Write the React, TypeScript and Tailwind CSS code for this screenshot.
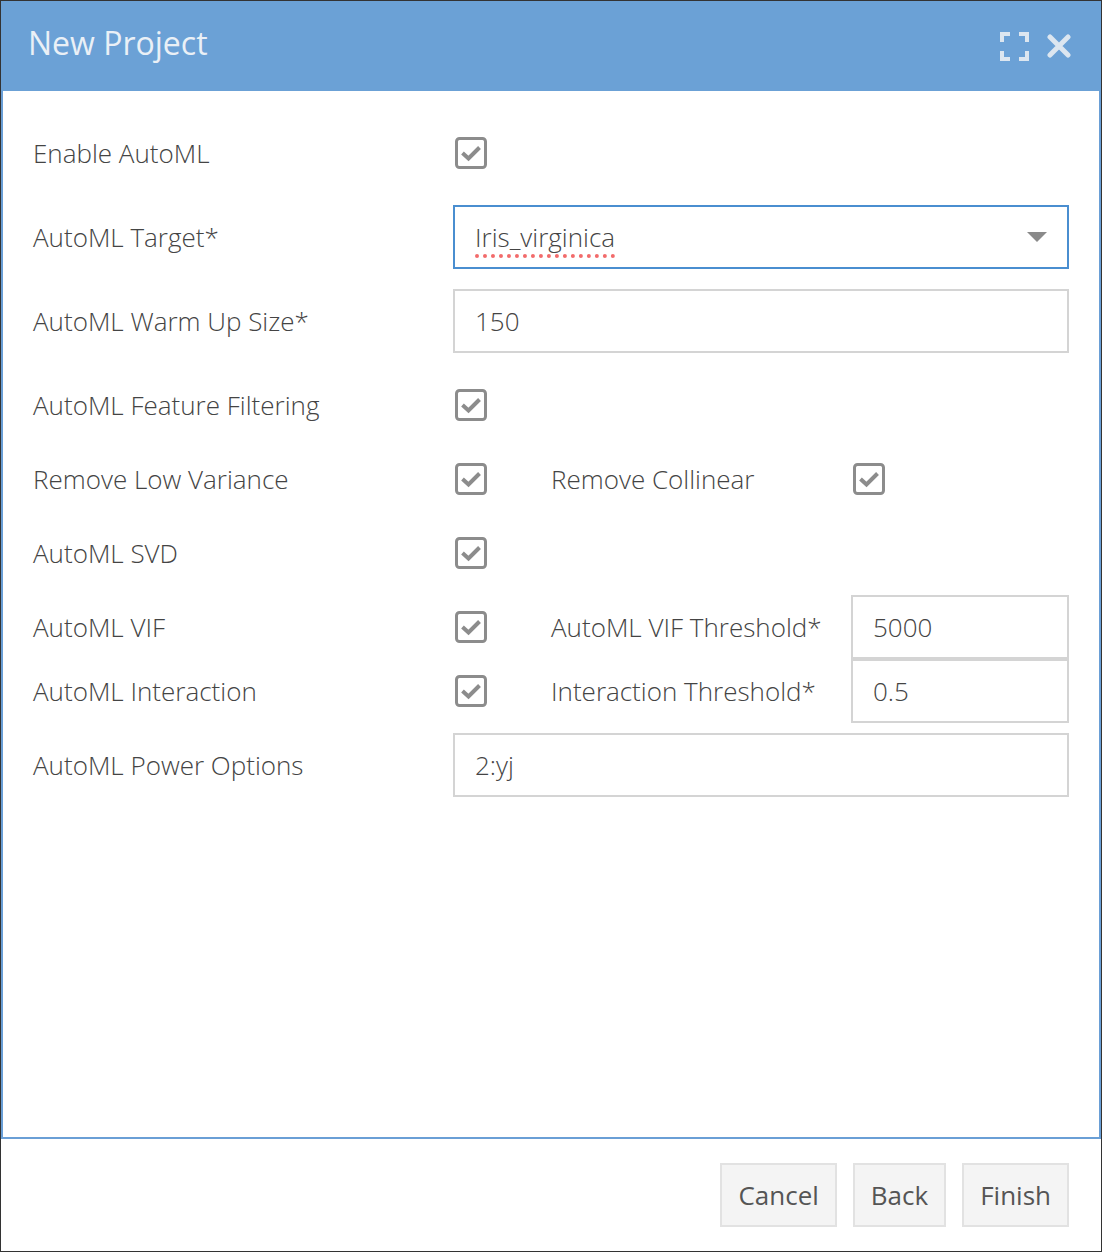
const font = { fontFamily: '"Open Sans", "Liberation Sans", sans-serif' };

const Check = () => (
  <svg width="32" height="32" viewBox="0 0 32 32" className="shrink-0">
    <rect x="1.5" y="1.5" width="29" height="29" rx="3" fill="white" stroke="#8c8c8c" strokeWidth="3" />
    <path d="M7.5 16 L13.5 21.5 L24.5 10.5" fill="none" stroke="#8c8c8c" strokeWidth="4" />
  </svg>
);

const Label = ({ children }: { children: React.ReactNode }) => (
  <div className="text-[26px] font-light text-[#444]">{children}</div>
);

const TextBox = ({ value, className = "" }: { value: string; className?: string }) => (
  <div className={`h-16 border-2 border-[#d4d4d4] flex items-center pl-5 text-[26px] font-light text-[#444] ${className}`}>
    {value}
  </div>
);

const App = () => {
  return (
    <div className="w-[1102px] h-[1252px] border border-[#333] flex flex-col bg-white" style={font}>
      <div className="h-[90px] shrink-0 bg-[#6ba1d6] flex items-center justify-between pl-[27px] pr-[30px]">
        <div className="text-[32px] text-[#eaf0f6] pb-[6px]">New Project</div>
        <div className="flex items-center gap-[18px]">
          <svg width="29" height="29" viewBox="0 0 29 29">
            <path d="M2 10 V2 H10 M19 2 H27 V10 M27 19 V27 H19 M10 27 H2 V19" fill="none" stroke="#dce6f0" strokeWidth="4" />
          </svg>
          <svg width="24" height="24" viewBox="0 0 24 24">
            <path d="M3 3 L21 21 M21 3 L3 21" fill="none" stroke="#dce6f0" strokeWidth="5" strokeLinecap="round" />
          </svg>
        </div>
      </div>
      <div className="flex-1 border-x-2 border-b-2 border-[#6a9fd6] pt-[30px] pl-[30px] pr-[30px]">
        <div className="h-16 flex items-center mb-5">
          <div className="w-[420px]"><Label>Enable AutoML</Label></div>
          <div className="pl-[2px]"><Check /></div>
        </div>
        <div className="h-16 flex items-center mb-5">
          <div className="w-[420px]"><Label>AutoML Target*</Label></div>
          <div className="flex-1 h-16 border-2 border-[#4a8ed0] flex items-center justify-between pl-5 pr-5">
            <span className="text-[26px] font-light text-[#444] underline decoration-dotted decoration-[#f26b6b] decoration-[4px] underline-offset-[8px]">
              Iris_virginica
            </span>
            <svg width="20" height="11" viewBox="0 0 20 11">
              <path d="M0 0 H20 L10 10 Z" fill="#8a8a8a" />
            </svg>
          </div>
        </div>
        <div className="h-16 flex items-center mb-5">
          <div className="w-[420px]"><Label>AutoML Warm Up Size*</Label></div>
          <TextBox value="150" className="flex-1" />
        </div>
        <div className="h-16 flex items-center mb-[10px]">
          <div className="w-[420px]"><Label>AutoML Feature Filtering</Label></div>
          <div className="pl-[2px]"><Check /></div>
        </div>
        <div className="h-16 flex items-center mb-[10px]">
          <div className="w-[420px]"><Label>Remove Low Variance</Label></div>
          <div className="pl-[2px] w-[98px]"><Check /></div>
          <div className="w-[302px]"><Label>Remove Collinear</Label></div>
          <Check />
        </div>
        <div className="h-16 flex items-center mb-[10px]">
          <div className="w-[420px]"><Label>AutoML SVD</Label></div>
          <div className="pl-[2px]"><Check /></div>
        </div>
        <div className="h-16 flex items-center">
          <div className="w-[420px]"><Label>AutoML VIF</Label></div>
          <div className="pl-[2px] w-[98px]"><Check /></div>
          <div className="w-[300px]"><Label>AutoML VIF Threshold*</Label></div>
          <TextBox value="5000" className="flex-1" />
        </div>
        <div className="h-16 flex items-center mb-[10px]">
          <div className="w-[420px]"><Label>AutoML Interaction</Label></div>
          <div className="pl-[2px] w-[98px]"><Check /></div>
          <div className="w-[300px]"><Label>Interaction Threshold*</Label></div>
          <TextBox value="0.5" className="flex-1" />
        </div>
        <div className="h-16 flex items-center">
          <div className="w-[420px]"><Label>AutoML Power Options</Label></div>
          <TextBox value="2:yj" className="flex-1" />
        </div>
      </div>
      <div className="h-[112px] shrink-0 flex justify-end items-start pt-6 pr-8 gap-4">
        {["Cancel", "Back", "Finish"].map((b) => (
          <div key={b} className="h-16 px-[16px] border-2 border-[#e2e2e2] bg-[#f4f4f4] flex items-center text-[26px] text-[#555]">
            {b}
          </div>
        ))}
      </div>
    </div>
  );
};

export default App;
